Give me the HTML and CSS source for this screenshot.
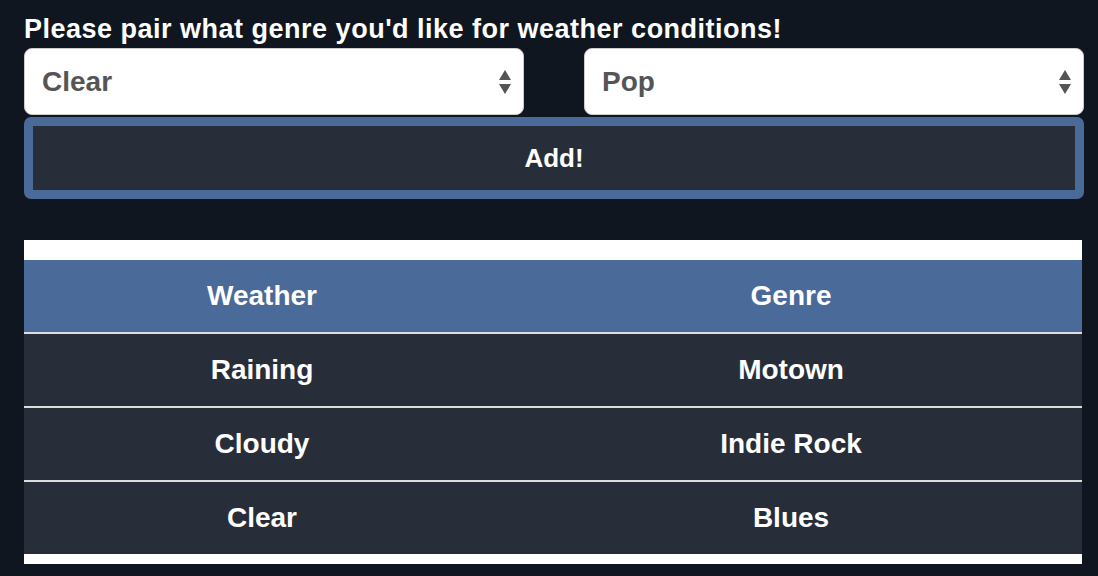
FILE: index.html
```html
<!DOCTYPE html>
<html>
<head>
<meta charset="utf-8">
<link rel="stylesheet" href="styles.css">
</head>
<body>
<main class="page">
  <h3 class="title">Please pair what genre you'd like for weather conditions!</h3>
  <div class="pickers">
    <div class="select-wrap">
      <select class="picker">
        <option>Clear</option>
        <option>Cloudy</option>
        <option>Raining</option>
      </select>
      <svg class="arrows" width="14" height="26" viewBox="0 0 14 26"><path d="M7 1 L13 11 L1 11 Z" fill="#555"/><path d="M1 15 L13 15 L7 25 Z" fill="#555"/></svg>
    </div>
    <div class="select-wrap">
      <select class="picker">
        <option>Pop</option>
        <option>Motown</option>
        <option>Indie Rock</option>
        <option>Blues</option>
      </select>
      <svg class="arrows" width="14" height="26" viewBox="0 0 14 26"><path d="M7 1 L13 11 L1 11 Z" fill="#555"/><path d="M1 15 L13 15 L7 25 Z" fill="#555"/></svg>
    </div>
  </div>
  <button class="add-btn">Add!</button>
  <div class="table-box">
    <table class="pairs">
      <thead>
        <tr><th class="col-weather">Weather</th><th>Genre</th></tr>
      </thead>
      <tbody>
        <tr><td>Raining</td><td>Motown</td></tr>
        <tr><td>Cloudy</td><td>Indie Rock</td></tr>
        <tr><td>Clear</td><td>Blues</td></tr>
      </tbody>
    </table>
  </div>
</main>
</body>
</html>
```
FILE: styles.css
```css
html, body {
  margin: 0;
  padding: 0;
  background: #10161f;
}
body {
  font-family: "Liberation Sans", Arial, Helvetica, sans-serif;
  color: #fff;
}
.page {
  width: 1060px;
  padding: 13px 0 0 24px;
}
.title {
  margin: 0;
  font-size: 27px;
  line-height: 32px;
  font-weight: bold;
  letter-spacing: 0.5px;
  color: #fff;
}
.pickers {
  margin-top: 3px;
  display: flex;
  justify-content: space-between;
  width: 1060px;
}
.select-wrap {
  position: relative;
  width: 500px;
  height: 67px;
}
.picker {
  -webkit-appearance: none;
  appearance: none;
  width: 100%;
  height: 100%;
  box-sizing: border-box;
  background: #fff;
  border: 1px solid #ccc;
  border-radius: 8px;
  padding: 0 0 0 17px;
  font-family: "Liberation Sans", Arial, Helvetica, sans-serif;
  font-size: 28px;
  font-weight: bold;
  color: #555;
  outline: none;
}
.arrows {
  position: absolute;
  right: 12px;
  top: 21px;
  pointer-events: none;
}
.add-btn {
  display: block;
  margin-top: 2px;
  width: 1060px;
  height: 82px;
  box-sizing: border-box;
  background: #272e39;
  border: 9px solid #4a6a99;
  border-radius: 7px;
  color: #fff;
  font-family: "Liberation Sans", Arial, Helvetica, sans-serif;
  font-size: 26px;
  font-weight: bold;
  padding: 0;
}
.table-box {
  margin-top: 41px;
  width: 1058px;
  background: #fff;
  padding: 20px 0 10px;
}
.pairs {
  width: 100%;
  border-collapse: collapse;
  font-size: 28px;
  font-weight: bold;
  color: #fff;
}
.pairs th, .pairs td {
  height: 72px;
  padding: 0;
  text-align: center;
  vertical-align: middle;
}
.col-weather {
  width: 476px;
}
.pairs thead tr {
  background: #4a6a99;
}
.pairs tbody tr {
  background: #272e39;
  border-top: 2px solid #ddd;
}
```
